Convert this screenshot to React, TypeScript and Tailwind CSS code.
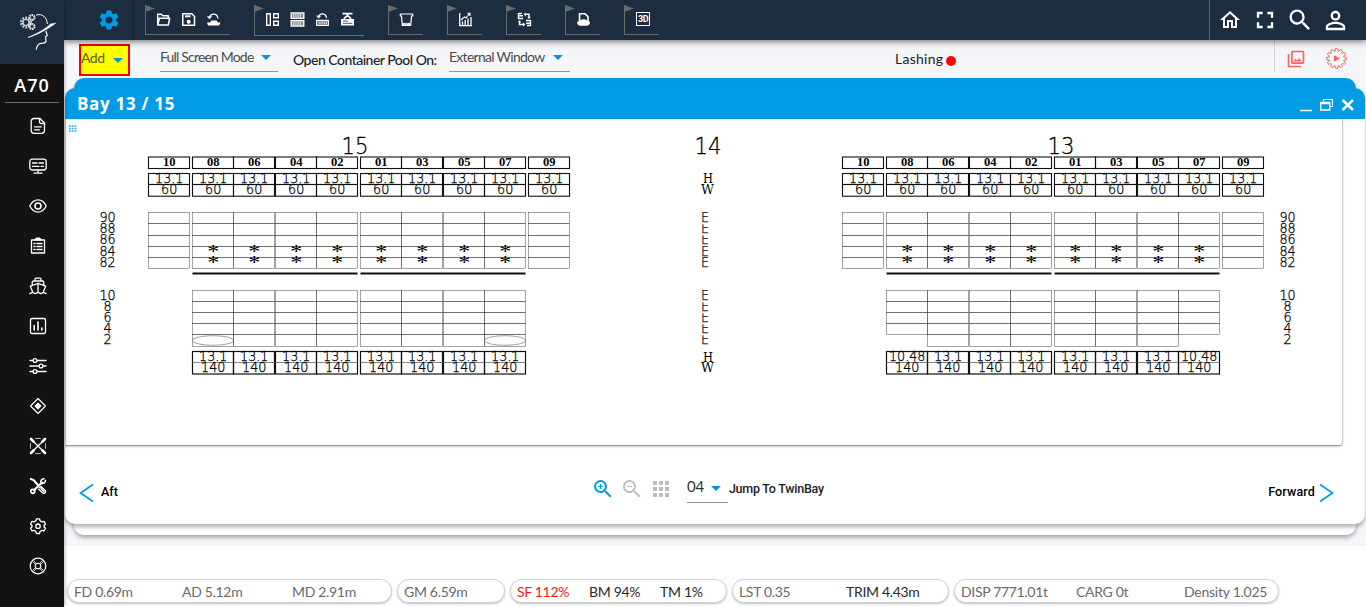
import React from "react";
import {
  MdSettings,
  MdFullscreen,
  MdSearch,
  MdPersonOutline,
  MdOutlineHome,
  MdOutlinePhotoLibrary,
  MdZoomIn,
  MdZoomOut,
  MdApps,
} from "react-icons/md";

type Kids = { children?: React.ReactNode };

/* ---------- small drawings ---------- */

function Logo() {
  return (
    <svg width="38" height="40" viewBox="0 0 38 40" fill="none" stroke="#fff">
      <circle cx="7" cy="10.500" r="4.600" stroke="#b9bfc4" strokeWidth="3" strokeDasharray="1.900 1" />
      <circle cx="7" cy="10.500" r="3" stroke="#dfe2e5" strokeWidth="1.200" />
      <circle cx="13" cy="5.500" r="2.500" stroke="#e3e6e9" strokeWidth="2.200" strokeDasharray="1.600 .6" />
      <circle cx="13" cy="14.500" r="2.500" stroke="#e3e6e9" strokeWidth="2.200" strokeDasharray="1.600 .6" />
      <path d="M17 3.200C23 1 28 5 28.300 12" strokeWidth="1" />
      <path d="M9 25.500C17 23.500 29 17 36.600 11.200L31.500 12C26 17.500 18 21.500 9 25.500Z" fill="#fff" strokeWidth=".6" />
      <path d="M27 19l1.200 4.500-1.500 1.300.3 4.500c-.4 2-2.600 1.800-5 2-3 .5-4.400 3-4.700 6.500" strokeWidth="1.200" />
    </svg>
  );
}

function Svg18({ children }: Kids) {
  return (
    <svg width="18" height="18" viewBox="0 0 18 18" fill="none" stroke="#fff" strokeWidth="1.3" strokeLinecap="round" strokeLinejoin="round">
      {children}
    </svg>
  );
}

const sideIcons: React.ReactNode[] = [
  <>
    <path d="M5 1.500h6l4.500 4.500v7.500a2.800 2.800 0 0 1-2.800 2.800H5a2.800 2.800 0 0 1-2.800-2.800V4.300A2.800 2.800 0 0 1 5 1.500z" />
    <path d="M10.500 1.800v3.200a1.500 1.500 0 0 0 1.500 1.500h3.300M5.500 9.800h7M5.500 12.800h5" />
  </>,
  <>
    <rect x=".8" y="2.200" width="16.400" height="10.800" rx="2.500" />
    <path d="M3.500 6h4.500M10 6h4.500M3.500 9.300h6.500M12 9.300h2.500M9 13v2.500M5 16.200h8" />
  </>,
  <>
    <path d="M.8 9C2.800 5 5.600 2.900 9 2.900s6.200 2.100 8.200 6.100c-2 4-4.800 6.100-8.200 6.100S2.800 13 .8 9z" />
    <circle cx="9" cy="9" r="3" strokeWidth="1.600" />
  </>,
  <>
    <path d="M2.500 3h13v13h-13z" />
    <path d="M6 2.800L7.500 1.300h3L12 2.800zM5 6.500h1M8 6.500h5M5 9.500h1M8 9.500h5M5 12.500h1M8 12.500h5" strokeWidth="1.600" />
  </>,
  <>
    <path d="M6 4V2.200a1 1 0 0 1 1-1h4a1 1 0 0 1 1 1V4M3.200 7.500V5.500A1.500 1.500 0 0 1 4.700 4h8.600a1.500 1.500 0 0 1 1.500 1.500v2M9 6v9.500M3.500 14.500L1.300 9.200 9 6.300l7.700 2.900-2.200 5.300M.8 16.500c1.400 0 1.400-1 2.700-1s1.400 1 2.700 1 1.400-1 2.800-1 1.400 1 2.800 1 1.400-1 2.700-1 1.400 1 2.700 1" />
  </>,
  <>
    <rect x="1.500" y="1.500" width="15" height="15" rx="1.500" />
    <path d="M5.200 8.500V13M9 5v8M12.800 11v2" strokeWidth="1.600" />
  </>,
  <>
    <path d="M1 3.500h3.200M8 3.500h9M1 9h9.200M14 9h3M1 14.500h3.200M8 14.500h9" />
    <circle cx="6" cy="3.500" r="1.900" />
    <circle cx="12" cy="9" r="1.900" />
    <circle cx="6" cy="14.500" r="1.900" />
  </>,
  <>
    <path d="M9 1.500L16.500 9 9 16.500 1.500 9z" strokeWidth="1.100" />
    <path d="M9 6.300L11.700 9 9 11.700 6.300 9z" fill="#fff" />
  </>,
  <>
    <path d="M2 2l14 14M16 2L2 16" strokeWidth="1.400" />
    <path d="M2 2l2.500 2.500M16 2l-2.500 2.500M2 16l2.500-2.500M16 16l-2.500-2.500" strokeWidth="2.600" />
    <path d="M6.500 1.500h5M6.500 16.500h5M1.500 6.500v5M16.500 6.500v5" strokeWidth=".7" />
  </>,
  <>
    <path d="M1.800 2l2.700 1 4 4.500" strokeWidth="2" />
    <path d="M5.200 13L13 5.500" strokeWidth="2.200" />
    <circle cx="3.800" cy="14.300" r="2" strokeWidth="1.700" />
    <path d="M14.800 1.800a3 3 0 0 0-2.800 4.200 3 3 0 0 0 4.500-2.300" strokeWidth="1.700" />
    <path d="M10.300 10.700l1.700-1.200 4.500 4.300c.5 1.500-.8 2.800-2.300 2.500L9.700 12.300M12 11.500l3 3" />
  </>,
  <>
    <path d="M7.500 1.800h3l.6 2 1.800 1.100 2.100-.5 1.500 2.600-1.500 1.500v1.300l1.500 1.500-1.500 2.600-2.100-.5-1.800 1.100-.6 2h-3l-.6-2-1.800-1.100-2.100.5-1.500-2.600L3 9.800V8.500L1.500 7 3 4.400l2.100.5 1.800-1.100z" />
    <circle cx="9" cy="9.200" r="2.200" />
  </>,
  <>
    <circle cx="9" cy="9" r="7.800" strokeWidth="1.200" />
    <circle cx="9" cy="9" r="2.800" strokeWidth="1.100" />
    <path d="M3.800 4.800l3 3M14.200 4.800l-3 3M3.800 13.200l3-3M14.200 13.200l-3-3M4.800 3.800l2.500 2.800M13.200 3.800l-2.500 2.800M4.800 14.200l2.500-2.800M13.200 14.200l-2.500-2.800" strokeWidth=".8" />
  </>,
];

function Svg14({ children }: Kids) {
  return (
    <svg width="15" height="15" viewBox="0 0 15 15" fill="none" stroke="#fff" strokeWidth="1.300">
      {children}
    </svg>
  );
}

const FolderIcon = () => (
  <Svg14>
    <path d="M1.700 13V2.200h3.600l1.500 1.600h5.500v2.400M1.700 13l1.700-6.800h10.300L12.300 13z" strokeWidth="1.500" strokeLinejoin="round" />
  </Svg14>
);
const SaveIcon = () => (
  <Svg14>
    <path d="M1.800 1.800h9l2.700 2.700v8.700H1.800z" strokeWidth="1.500" />
    <path d="M4 4.300h5.500" strokeWidth="2" />
    <circle cx="7.700" cy="9.700" r="2" fill="#fff" stroke="none" />
  </Svg14>
);
const UndoPileIcon = () => (
  <Svg14>
    <path d="M3.500 5.500C4.500 1 11 .5 12 6.500" />
    <path d="M.8 4.200L3.400 7.200 6.200 4.500z" fill="#fff" stroke="none" />
    <path d="M2 13.500l-1-3h3l1.500-2h5l1.500 2h2.500l-1.500 3z" fill="#fff" stroke="none" />
  </Svg14>
);
const BoardIcon = () => (
  <Svg14>
    <path d="M1.700 1.700h3.600v11.600H1.700zM8.700 1.700h4.600v4.100H8.700zM8.700 9.200h4.600v4.100H8.700z" strokeWidth="1.400" />
  </Svg14>
);
const RacksIcon = () => (
  <Svg14>
    <path d="M1.200 1h12.600v5.200H1.200zM1.200 8.800h12.600V14H1.200z" strokeWidth="1.400" />
    <path d="M2.500 3.600h10M2.500 11.400h10" strokeWidth="3.600" strokeDasharray="1.400 .5" opacity=".9" />
  </Svg14>
);
const UndoBoxIcon = () => (
  <Svg14>
    <path d="M3.500 5C4.500 .8 11 .8 11.500 6M1.700 8.500h11.600v4.800H1.700z" strokeWidth="1.300" />
    <path d="M1 3.500l2.500 3L6 4z" fill="#fff" stroke="none" />
    <path d="M3.500 11h8.500" strokeWidth="3" strokeDasharray="1.200 .7" />
  </Svg14>
);
const CraneBoxIcon = () => (
  <Svg14>
    <path d="M2.500 1.600h10M7.500 1.600v2.500M3.800 6.600L7.500 3.600l3.700 3" strokeWidth="1.700" />
    <path d="M1 7h13v6.500H1z" fill="#fff" stroke="none" />
    <path d="M2.800 9h5M2.800 11.300h9.500" stroke="#1b2d3f" strokeWidth=".8" />
  </Svg14>
);
const BasketIcon = () => (
  <Svg14>
    <path d="M1.300 2h12.400v2h-1.200l-.8 9.300H3.300L2.500 4H1.300z" strokeWidth="1.200" />
    <path d="M3.500 12.700l1.500-1.300 1.200 1.300 1.300-1.300 1.300 1.300 1.200-1.300 1.500 1.300" />
  </Svg14>
);
const ChartIcon = () => (
  <Svg14>
    <path d="M1.700 1v12.700H14M4.500 13V9.500M7.200 13V8M10 13V6.500M13 13V5" strokeWidth="1.300" />
    <path d="M3 8l3.500-3 1.500 1 3.500-4.500M9.300 1.300h2.700V4" strokeWidth="1.100" />
  </Svg14>
);
const SwapIcon = () => (
  <Svg14>
    <path d="M1.500 1v5.500H6M1.500 3.700H6M1.500 1.500H5M13.500 14V8.500H9M13.500 11.300H9M13.500 13.500h-3.500M8 2.300h4v3.500M2.500 9v3.500H7" strokeWidth="1.400" />
    <path d="M10.300 4.800L12 7l1.700-2.200zM9 .4v3.800L6.500 2.300zM6 10.600l2.500 2-2.500 1.900zM.8 10.200l1.700-2.200 1.700 2.200z" fill="#fff" stroke="none" />
  </Svg14>
);
const HelmetIcon = () => (
  <Svg14>
    <path d="M3.500 10V1.700h5.500L12 4.700V10" strokeWidth="1.600" />
    <path d="M1.200 12v-2.500h2c.8-3 7.800-3 8.600 0h2V12l-2.300 1.800h-8z" fill="#fff" stroke="none" />
  </Svg14>
);
const ThreeDIcon = () => (
  <span className="flex h-[14px] w-[14px] items-center justify-center border border-white font-['Roboto',sans-serif] text-[9px] font-bold leading-none tracking-[-0.5px] text-white">
    3D
  </span>
);

const GearPlayIcon = () => {
  const pts: string[] = [];
  for (let i = 0; i < 12; i++) {
    const a = (i * Math.PI) / 6;
    const p = (r: number, d: number) =>
      `${(10.5 + r * Math.cos(a + d)).toFixed(2)},${(10.5 + r * Math.sin(a + d)).toFixed(2)}`;
    pts.push(p(7.6, -0.19), p(9.9, -0.12), p(9.9, 0.12), p(7.6, 0.19));
  }
  return (
    <svg width="21" height="21" viewBox="0 0 21 21">
      <polygon points={pts.join(" ")} fill="none" stroke="#f8655c" strokeWidth="1" />
      <path d="M8 7.200l6 3.300-6 3.300z" fill="#f8655c" />
    </svg>
  );
};

/* ---------- top bar ---------- */

function ToolGroup({ className, children }: Kids & { className: string }) {
  return (
    <div className={`relative mt-[5px] flex items-center border-b border-l border-[#6b6b6b] pb-px ${className}`}>
      <svg className="absolute -left-px top-0" width="10" height="7" viewBox="0 0 10 7">
        <path d="M0 0L10 3.500 0 7z" fill="#6b6b6b" />
      </svg>
      {children}
    </div>
  );
}

function TopBar() {
  return (
    <header className="z-10 flex h-10 shrink-0 items-start bg-[#1b2d3f] shadow-[0_2px_6px_rgba(0,0,0,0.5)]">
      <div className="flex h-10 w-[70px] items-center border-r border-[#16232f] pl-[33px]">
        <MdSettings className="size-6 shrink-0 text-[#039be5]" />
      </div>
      <ToolGroup className="ml-[11px] h-[30px] w-[85px] gap-[10px] pl-[10px]">
        <FolderIcon />
        <SaveIcon />
        <UndoPileIcon />
      </ToolGroup>
      <ToolGroup className="ml-6 h-[31px] w-[110px] gap-[10px] pl-[10px]">
        <BoardIcon />
        <RacksIcon />
        <UndoBoxIcon />
        <CraneBoxIcon />
      </ToolGroup>
      <ToolGroup className="ml-6 h-[30px] w-[35px] pl-[10px]">
        <BasketIcon />
      </ToolGroup>
      <ToolGroup className="ml-6 h-[30px] w-[35px] pl-[10px]">
        <ChartIcon />
      </ToolGroup>
      <ToolGroup className="ml-6 h-[30px] w-[35px] pl-[10px]">
        <SwapIcon />
      </ToolGroup>
      <ToolGroup className="ml-6 h-[30px] w-[35px] pl-[10px]">
        <HelmetIcon />
      </ToolGroup>
      <ToolGroup className="ml-6 h-[30px] w-[35px] pl-[11px]">
        <ThreeDIcon />
      </ToolGroup>
      <div className="ml-auto flex h-10 w-[157px] items-center gap-[11px] border-l border-[#5f6b77] pl-[8px] text-white">
        <MdOutlineHome className="size-6" />
        <MdFullscreen className="-ml-[2px] size-[28px]" />
        <MdSearch className="-ml-[4px] size-[28px]" />
        <MdPersonOutline className="-ml-[4px] size-[29px]" />
      </div>
    </header>
  );
}

/* ---------- secondary bar ---------- */

const Caret = () => (
  <svg width="10" height="5" viewBox="0 0 10 5" className="shrink-0">
    <path d="M0 0h10L5 5z" fill="#0294df" />
  </svg>
);

function SubBar() {
  return (
    <div className="flex h-[38px] shrink-0 items-start font-['Lato',sans-serif] text-sm leading-none text-[#4c4c4c]">
      <div className="ml-[15px] mt-1 flex h-8 w-[51px] items-center justify-between border-2 border-[#f00000] bg-[#ffff00] pr-[5px] tracking-[-0.5px] text-[#5a5a1c]">
        <span className="-mt-1">Add</span>
        <Caret />
      </div>
      <div className="ml-[30px] flex h-8 w-[118px] items-center justify-between border-b border-[#949494] pr-[7px] pt-1">
        <span className="-mt-0.5 whitespace-nowrap tracking-[-0.82px]">Full Screen Mode</span>
        <Caret />
      </div>
      <span className="ml-[15px] mt-[13px] w-[142px] whitespace-nowrap font-medium tracking-[-0.5px] text-[#1c1f24]">
        Open Container Pool On:
      </span>
      <div className="ml-[14px] flex h-8 w-[121px] items-center justify-between border-b border-[#949494] pr-[7px] pt-1">
        <span className="-mt-0.5 whitespace-nowrap tracking-[-0.72px]">External Window</span>
        <Caret />
      </div>
      <div className="ml-[325px] mt-[12px] flex items-center gap-[3px] tracking-[0.25px] text-[#222]">
        Lashing
        <i className="mt-[3px] size-2.5 rounded-full bg-[#ff0000]" />
      </div>
      <div className="ml-auto flex h-8 w-[92px] items-center border-l border-[#cfd2d6] pl-[11px] pt-[5px]">
        <MdOutlinePhotoLibrary className="size-5 text-[#f8655c]" />
        <span className="ml-[20px]">
          <GearPlayIcon />
        </span>
      </div>
    </div>
  );
}

/* ---------- bay plan drawing ---------- */

const COLS = [
  { x: 148.5, n: "10" },
  { x: 192.5, n: "08" },
  { x: 233.5, n: "06" },
  { x: 275.5, n: "04" },
  { x: 316.5, n: "02" },
  { x: 360.5, n: "01" },
  { x: 401.5, n: "03" },
  { x: 443.5, n: "05" },
  { x: 484.5, n: "07" },
  { x: 528.5, n: "09" },
];
const DECK_Y = [212.5, 223.5, 235.5, 246.5, 257.5, 268.5];
const HOLD_Y = [290.5, 301.5, 312.5, 323.5, 334.5, 346.5];
const DECK_LABELS = ["90", "88", "86", "84", "82"];
const HOLD_LABELS = ["10", "8", "6", "4", "2"];
const DECK_BASE = [222, 233, 244, 256, 267];
const HOLD_BASE = [300, 311, 322, 333, 344];

function Num({ x, y, size = 13.5, children }: { x: number; y: number; size?: number; children: string }) {
  const units = children.split("").reduce((s, c) => s + (c === "." ? 0.29 : 0.6), 0);
  return (
    <text
      x={x}
      y={y}
      textAnchor="middle"
      className="fill-black stroke-black font-['DejaVu_Sans',sans-serif] font-extralight"
      strokeWidth=".3"
      fontSize={size}
      textLength={units * size}
      lengthAdjust="spacingAndGlyphs"
    >
      {children}
    </text>
  );
}

function Bay({ dx, title, titleX, narrowEnds }: { dx: number; title: string; titleX: number; narrowEnds?: boolean }) {
  const W = 41;
  return (
    <g transform={`translate(${dx} 0)`}>
      <Num x={titleX} y={154} size={22.5}>
        {title}
      </Num>
      {COLS.map((c, i) => {
        const inner = i > 0 && i < 9;
        const edge = i === 1 || i === 8;
        const mid = c.x + 20.7;
        return (
          <g key={c.n}>
            <g fill="none" stroke="#111" strokeWidth="1.100">
              <rect x={c.x} y={157} width={W} height={11.500} />
              <rect x={c.x} y={173.500} width={W} height={11} />
              <rect x={c.x} y={184.500} width={W} height={11.700} />
            </g>
            <text x={mid} y={166} textAnchor="middle" fontSize="12.500" className="fill-black font-['Liberation_Serif',serif] font-bold">
              {c.n}
            </text>
            <Num x={mid} y={183.300}>13.1</Num>
            <Num x={mid} y={194}>60</Num>
            <g fill="none" stroke="#333" strokeWidth=".45">
              {DECK_Y.slice(0, 5).map((y, k) => (
                <rect key={y} x={c.x} y={y} width={W} height={DECK_Y[k + 1] - y} />
              ))}
            </g>
            {inner &&
              [249, 260].map((y) => (
                <text
                  key={y}
                  x={mid}
                  y={y + 9}
                  textAnchor="middle"
                  fontSize="19"
                  textLength="12"
                  lengthAdjust="spacingAndGlyphs"
                  className="fill-black font-['Liberation_Serif',serif]"
                >
                  *
                </text>
              ))}
            {inner && (
              <>
                <g fill="none" stroke="#333" strokeWidth=".45">
                  {HOLD_Y.slice(0, narrowEnds && edge ? 4 : 5).map((y, k) => (
                    <rect key={y} x={c.x} y={y} width={W} height={HOLD_Y[k + 1] - y} />
                  ))}
                </g>
                {!narrowEnds && edge && (
                  <ellipse cx={c.x + 20.500} cy={340.500} rx={20.500} ry={4.800} fill="none" stroke="#777" strokeWidth=".7" />
                )}
                <rect x={c.x} y={351.500} width={W} height={22.500} fill="none" stroke="#111" strokeWidth="1.200" />
                <path d={`M${c.x} 362.500h${W}`} stroke="#777" strokeWidth=".9" />
                <Num x={mid} y={361.300}>{narrowEnds && edge ? "10.48" : "13.1"}</Num>
                <Num x={mid} y={372}>140</Num>
              </>
            )}
          </g>
        );
      })}
      <path d="M192.500 273.500H357.500M360.500 273.500H525.500" stroke="#111" strokeWidth="2" />
    </g>
  );
}

function BayPlan() {
  return (
    <svg width="1276" height="326" viewBox="66 119 1276 326" className="block">
      <Bay dx={0} title="15" titleX={355} />
      <Bay dx={694} title="13" titleX={367} narrowEnds />
      <Num x={708} y={154} size={22.500}>14</Num>
      {[183, 361.500].map((y) => (
        <g key={y} textAnchor="middle" className="fill-black font-['DejaVu_Serif',serif]" fontSize="13">
          <text x={708} y={y} textLength="10" lengthAdjust="spacingAndGlyphs">H</text>
          <text x={707.500} y={y + 10.500} textLength="13" lengthAdjust="spacingAndGlyphs">W</text>
        </g>
      ))}
      {[DECK_BASE, HOLD_BASE].map((bases, g) =>
        bases.map((y, i) => (
          <g key={y}>
            <Num x={107.500} y={y}>{g ? HOLD_LABELS[i] : DECK_LABELS[i]}</Num>
            <Num x={1287.500} y={y}>{g ? HOLD_LABELS[i] : DECK_LABELS[i]}</Num>
            <clipPath id={`tier-${g}-${i}`}>
              <rect x="698" y={i === 0 || (g === 0 && i > 2) ? y - 10.5 : y - 8.7} width="14" height="12" />
            </clipPath>
            <text
              x={705}
              y={y}
              textAnchor="middle"
              fontSize="13.500"
              strokeWidth=".25"
              clipPath={`url(#tier-${g}-${i})`}
              className="fill-black stroke-black font-['DejaVu_Sans',sans-serif] font-extralight"
              textLength="8"
              lengthAdjust="spacingAndGlyphs"
            >
              E
            </text>
          </g>
        )),
      )}
    </svg>
  );
}

/* ---------- bay window ---------- */

function BayWindow() {
  return (
    <section className="grid h-[468px] shrink-0 grid-cols-1 grid-rows-1 pl-px pr-px">
      <div className="col-start-1 row-start-1 mx-[9px] mb-[11px] rounded-[10px] bg-[linear-gradient(#039be5_30px,#fff_30px)] shadow-[0_3px_4px_rgba(0,0,0,0.3)]" />
      <div className="col-start-1 row-start-1 mb-[22px] mt-[10px] flex flex-col overflow-hidden rounded-[10px] bg-white shadow-[0_3px_4px_rgba(0,0,0,0.3)]">
        <div className="flex h-[31px] shrink-0 items-center bg-[#039be5] pl-3 pr-[11px]">
          <h1 className="font-['Open_Sans',sans-serif] text-[17px] font-bold leading-none tracking-[0.7px] text-white">Bay 13 / 15</h1>
          <svg className="ml-auto mt-[3px]" width="54" height="14" viewBox="0 0 54 14" fill="none" stroke="#fff">
            <path d="M0 12.500h12" strokeWidth="1.500" />
            <path d="M23.500 3.500V1.500h9v7h-2.500" strokeWidth="1.200" />
            <path d="M20.700 4.500h9v7.500h-9zM20.700 5.500h9" strokeWidth="1.400" />
            <path d="M42.500 2l10.500 10M53 2L42.500 12" strokeWidth="2.500" />
          </svg>
        </div>
        <div className="relative h-[327px] w-[1278px] shrink-0 rounded-br-[4px] border-b border-l border-r border-b-[#9b9b9b] border-l-[#c8c8c8] border-r-[#c8c8c8] shadow-[0_1px_2px_rgba(0,0,0,0.2)]">
          <svg className="absolute left-[3px] top-[6px]" width="8" height="7" viewBox="0 0 8 7">
            <path d="M0 1h8M0 3.500h8M0 6h8" stroke="#2aa5e8" strokeWidth="1.400" strokeDasharray="1.800 1" />
          </svg>
          <BayPlan />
        </div>
        <div className="flex flex-1 items-center pl-[14px] pr-[31px] pt-[15px] font-['Roboto',sans-serif] text-[12.5px] font-medium leading-none text-black">
          <svg width="15" height="20" viewBox="0 0 15 20" fill="none" stroke="#039be5" strokeWidth="1.800">
            <path d="M14 1.500L1.500 10 14 18.500" />
          </svg>
          <span className="ml-[7px]">Aft</span>
          <div className="-mt-[7px] ml-[473px] flex items-center">
            <MdZoomIn className="size-6 text-[#039be5]" />
            <MdZoomOut className="ml-[5px] size-6 text-[#bdbdbd]" />
            <MdApps className="ml-[5px] size-6 text-[#bdbdbd]" />
            <div className="ml-[14px] flex h-[28px] w-[41px] items-center border-b border-[#949494] font-['Lato',sans-serif] text-[15px] font-normal text-[#333]">
              <span className="-mt-1 mr-[7px]">04</span>
              <Caret />
            </div>
            <span className="ml-px tracking-[-0.25px] text-[#222]">Jump To TwinBay</span>
          </div>
          <span className="ml-auto tracking-[0.15px]">Forward</span>
          <svg className="ml-[4px]" width="15" height="20" viewBox="0 0 15 20" fill="none" stroke="#039be5" strokeWidth="1.800">
            <path d="M1 1.500L13.500 10 1 18.500" />
          </svg>
        </div>
      </div>
    </section>
  );
}

/* ---------- status pills ---------- */

function Pill({ className, children }: Kids & { className: string }) {
  return (
    <div className={`flex h-6 items-center whitespace-nowrap rounded-full border border-[#d2d2d2] bg-white pl-[6px] pt-0.5 shadow-[0_1px_2px_rgba(0,0,0,0.25)] ${className}`}>
      {children}
    </div>
  );
}

function StatusBar() {
  return (
    <footer className="flex flex-1 items-start gap-[5px] bg-white pl-[3px] pt-[33px] font-['Lato',sans-serif] text-sm leading-none tracking-[-0.32px] text-[#6a6a6a]">
      <Pill className="w-[325px]">
        <span className="w-[108px]">FD 0.69m</span>
        <span className="w-[110px]">AD 5.12m</span>
        <span>MD 2.91m</span>
      </Pill>
      <Pill className="w-[108px]">
        <span>GM 6.59m</span>
      </Pill>
      <Pill className="w-[217px] text-[#2a2a2a]">
        <span className="w-[72px] text-[#f01818]">SF 112%</span>
        <span className="w-[71px]">BM 94%</span>
        <span>TM 1%</span>
      </Pill>
      <Pill className="w-[217px]">
        <span className="w-[107px]">LST 0.35</span>
        <span className="text-[#2a2a2a]">TRIM 4.43m</span>
      </Pill>
      <Pill className="w-[325px]">
        <span className="w-[115px]">DISP 7771.01t</span>
        <span className="w-[108px]">CARG 0t</span>
        <span className="tracking-[-0.25px]">Density 1.025</span>
      </Pill>
    </footer>
  );
}

export default function App() {
  return (
    <div className="flex h-[607px] w-[1366px] overflow-hidden bg-[#f4f6f9]">
      <aside className="z-20 flex w-16 shrink-0 flex-col bg-[#131313] shadow-[0_0_4px_rgba(0,0,0,0.4)]">
        <div className="h-16 bg-[#1b2d3f] pl-[19px] pt-[12px]">
          <Logo />
        </div>
        <div className="mx-[5px] flex h-[39px] items-center justify-center border-b border-[#6d6d6d] pt-1 font-['Open_Sans',sans-serif] text-[18px] font-semibold tracking-[1px] text-white">
          A70
        </div>
        <nav className="flex flex-col items-center gap-[22px] pl-3 pt-[14px]">
          {sideIcons.map((icon, i) => (
            <Svg18 key={i}>{icon}</Svg18>
          ))}
        </nav>
      </aside>
      <main className="flex min-w-0 flex-1 flex-col">
        <TopBar />
        <SubBar />
        <BayWindow />
        <StatusBar />
      </main>
    </div>
  );
}
